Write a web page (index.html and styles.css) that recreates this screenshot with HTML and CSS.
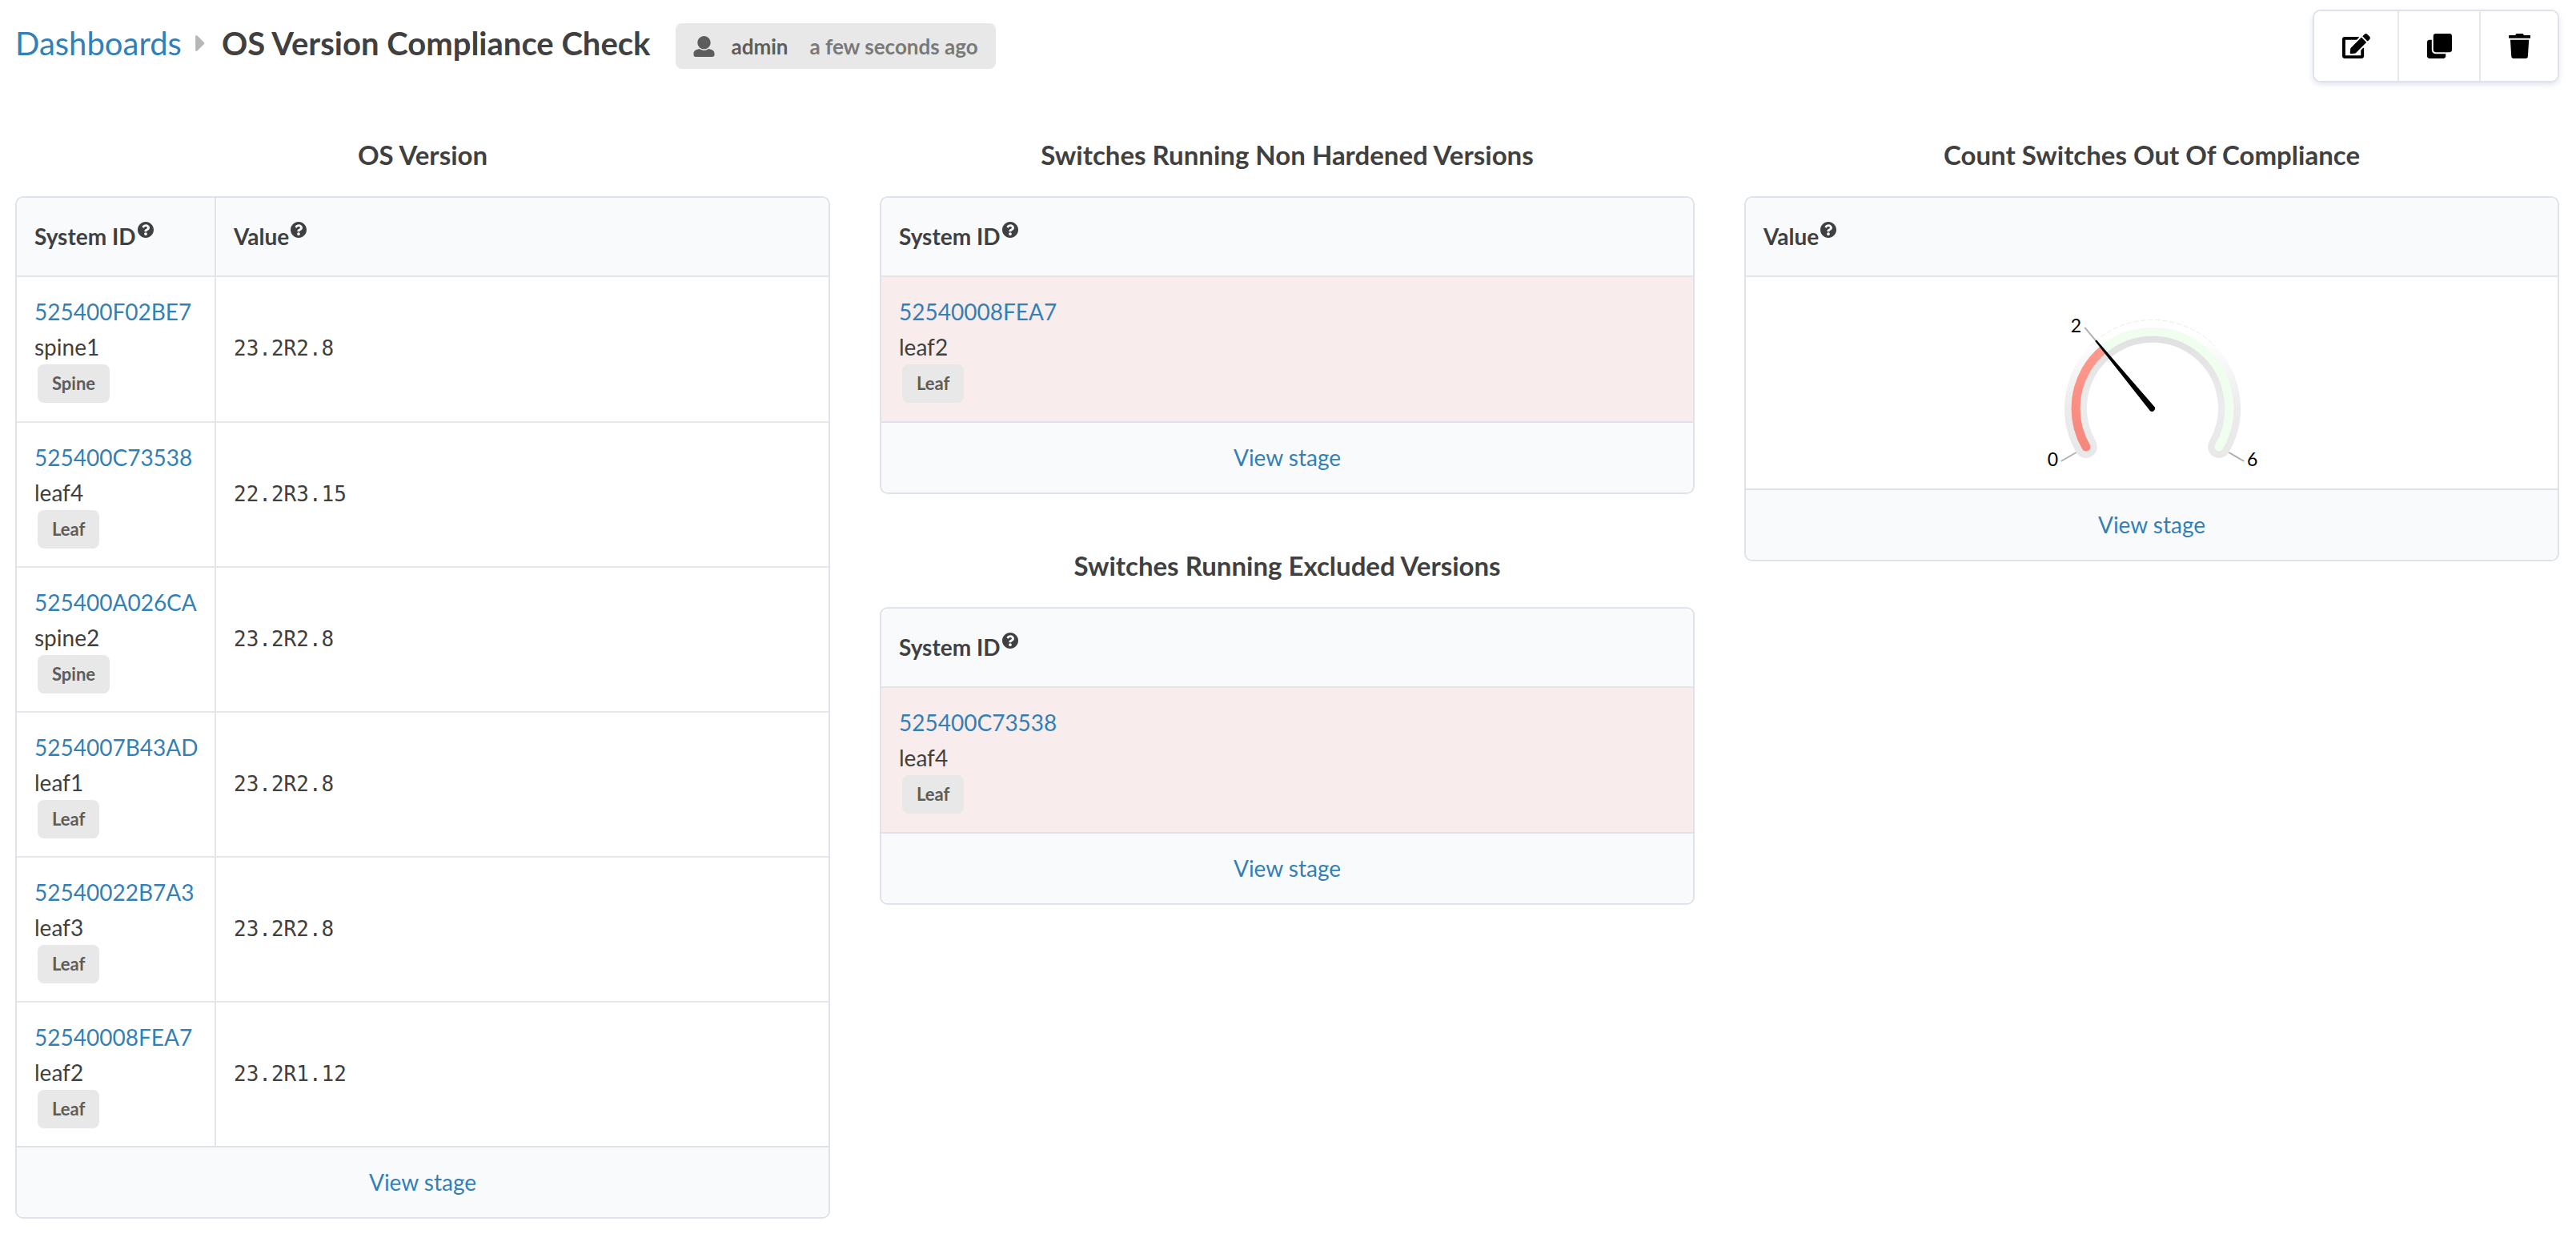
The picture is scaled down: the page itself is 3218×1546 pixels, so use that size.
FILE: index.html
```html
<!DOCTYPE html>
<html lang="en">
<head>
<meta charset="utf-8">
<title>OS Version Compliance Check</title>
<link rel="stylesheet" href="styles.css">
</head>
<body>
<svg class="sprite" aria-hidden="true">
  <symbol id="help" viewBox="8 8 496 496"><path d="M504 256c0 136.997-111.043 248-248 248S8 392.997 8 256C8 119.083 119.043 8 256 8s248 111.083 248 248zM262.655 90c-54.497 0-89.255 22.957-116.549 63.758-3.536 5.286-2.353 12.415 2.715 16.258l34.699 26.31c5.205 3.947 12.621 3.008 16.665-2.122 17.864-22.658 30.113-35.797 57.303-35.797 20.429 0 45.698 13.148 45.698 32.958 0 14.976-12.363 22.667-32.534 33.976C247.128 238.528 216 254.941 216 296v4c0 6.627 5.373 12 12 12h56c6.627 0 12-5.373 12-12v-1.333c0-28.462 83.186-29.647 83.186-106.667 0-58.002-60.165-102-116.531-102zM256 338c-25.365 0-46 20.635-46 46 0 25.364 20.635 46 46 46s46-20.636 46-46c0-25.364-20.635-46-46-46z"/></symbol>
</svg>
<header class="topbar">
  <nav class="breadcrumb" aria-label="Breadcrumb">
    <a href="#">Dashboards</a>
    <svg class="caret" viewBox="0 0 192 512" aria-hidden="true"><path d="M0 384.662V127.338c0-17.818 21.543-26.741 34.142-14.142l128.657 128.657c7.81 7.81 7.81 20.474 0 28.284L34.142 398.804C21.543 411.404 0 402.48 0 384.662z"/></svg>
    <h1 class="page-title">OS Version Compliance Check</h1>
  </nav>
  <div class="label author">
    <svg class="user-icon" viewBox="0 0 512 512" aria-hidden="true"><path d="M256 0c88.366 0 160 71.634 160 160s-71.634 160-160 160S96 248.366 96 160 167.634 0 256 0zm183.283 333.821l-71.313-17.828c-74.923 53.89-165.738 41.864-223.94 0l-71.313 17.828C29.981 344.505 0 382.903 0 426.955V464c0 26.51 21.49 48 48 48h416c26.51 0 48-21.49 48-48v-37.045c0-44.052-29.981-82.45-72.717-93.134z"/></svg>
    <span>admin</span>
    <span class="time">a few seconds ago</span>
  </div>
  <div class="actions">
    <button type="button" class="action" aria-label="Edit"><svg class="action-icon" viewBox="0 0 576 512"><path d="M402.6 83.2l90.2 90.2c3.8 3.8 3.8 10 0 13.8L274.4 405.6l-92.8 10.3c-12.4 1.4-22.9-9.1-21.5-21.5l10.3-92.8L388.8 83.2c3.8-3.8 10-3.8 13.8 0zm162-22.9l-48.8-48.8c-15.2-15.2-39.9-15.2-55.2 0l-35.4 35.4c-3.8 3.8-3.8 10 0 13.8l90.2 90.2c3.8 3.8 10 3.8 13.8 0l35.4-35.4c15.2-15.3 15.2-40 0-55.2zM384 346.2V448H64V128h229.8c3.2 0 6.2-1.3 8.5-3.5l40-40c7.6-7.6 2.2-20.5-8.5-20.5H48C21.5 64 0 85.5 0 112v352c0 26.5 21.5 48 48 48h352c26.5 0 48-21.5 48-48V306.2c0-10.7-12.9-16-20.5-8.5l-40 40c-2.2 2.3-3.5 5.3-3.5 8.5z"/></svg></button>
    <button type="button" class="action" aria-label="Clone"><svg class="action-icon" viewBox="0 0 512 512"><path d="M464 0c26.51 0 48 21.49 48 48v288c0 26.51-21.49 48-48 48H176c-26.51 0-48-21.49-48-48V48c0-26.51 21.49-48 48-48h288M176 416c-44.112 0-80-35.888-80-80V128H48c-26.51 0-48 21.49-48 48v288c0 26.51 21.49 48 48 48h288c26.51 0 48-21.49 48-48v-48H176z"/></svg></button>
    <button type="button" class="action" aria-label="Delete"><svg class="action-icon" viewBox="0 0 448 512"><path d="M432 32H312l-9.4-18.7A24 24 0 0 0 281.1 0H166.8a23.72 23.72 0 0 0-21.4 13.3L136 32H16A16 16 0 0 0 0 48v32a16 16 0 0 0 16 16h416a16 16 0 0 0 16-16V48a16 16 0 0 0-16-16zM53.2 467a48 48 0 0 0 47.9 45h245.8a48 48 0 0 0 47.9-45L416 128H32z"/></svg></button>
  </div>
</header>
<main class="board">
  <div class="column">
    <section class="widget">
      <h2 class="widget-title">OS Version</h2>
      <div class="panel">
        <table class="grid">
          <thead><tr><th class="id-col" scope="col">System ID<svg class="help"><use href="#help"/></svg></th><th scope="col">Value<svg class="help"><use href="#help"/></svg></th></tr></thead>
          <tbody>
            <tr><td class="id-col"><a href="#">525400F02BE7</a><div>spine1</div><span class="label role">Spine</span></td><td class="mono">23.2R2.8</td></tr>
            <tr><td class="id-col"><a href="#">525400C73538</a><div>leaf4</div><span class="label role">Leaf</span></td><td class="mono">22.2R3.15</td></tr>
            <tr><td class="id-col"><a href="#">525400A026CA</a><div>spine2</div><span class="label role">Spine</span></td><td class="mono">23.2R2.8</td></tr>
            <tr><td class="id-col"><a href="#">5254007B43AD</a><div>leaf1</div><span class="label role">Leaf</span></td><td class="mono">23.2R2.8</td></tr>
            <tr><td class="id-col"><a href="#">52540022B7A3</a><div>leaf3</div><span class="label role">Leaf</span></td><td class="mono">23.2R2.8</td></tr>
            <tr><td class="id-col"><a href="#">52540008FEA7</a><div>leaf2</div><span class="label role">Leaf</span></td><td class="mono">23.2R1.12</td></tr>
          </tbody>
        </table>
        <div class="panel-footer"><a href="#">View stage</a></div>
      </div>
    </section>
  </div>
  <div class="column">
    <section class="widget">
      <h2 class="widget-title">Switches Running Non Hardened Versions</h2>
      <div class="panel">
        <table class="grid">
          <thead><tr><th scope="col">System ID<svg class="help"><use href="#help"/></svg></th></tr></thead>
          <tbody><tr class="anomaly"><td><a href="#">52540008FEA7</a><div>leaf2</div><span class="label role">Leaf</span></td></tr></tbody>
        </table>
        <div class="panel-footer"><a href="#">View stage</a></div>
      </div>
    </section>
    <section class="widget">
      <h2 class="widget-title">Switches Running Excluded Versions</h2>
      <div class="panel">
        <table class="grid">
          <thead><tr><th scope="col">System ID<svg class="help"><use href="#help"/></svg></th></tr></thead>
          <tbody><tr class="anomaly"><td><a href="#">525400C73538</a><div>leaf4</div><span class="label role">Leaf</span></td></tr></tbody>
        </table>
        <div class="panel-footer"><a href="#">View stage</a></div>
      </div>
    </section>
  </div>
  <div class="column">
    <section class="widget">
      <h2 class="widget-title">Count Switches Out Of Compliance</h2>
      <div class="panel">
        <table class="grid">
          <thead><tr><th scope="col">Value<svg class="help"><use href="#help"/></svg></th></tr></thead>
          <tbody><tr><td class="gauge-cell">
            <svg class="gauge" viewBox="-151 -143 300 220" role="img" aria-label="2 on a scale from 0 to 6">
              <defs>
                <linearGradient id="rim" gradientUnits="userSpaceOnUse" x1="0" y1="-110" x2="0" y2="62"><stop offset=".12" stop-color="#fff"/><stop offset=".65" stop-color="#ebebeb"/><stop offset="1" stop-color="#e8e8e8"/></linearGradient>
                <linearGradient id="lip" gradientUnits="userSpaceOnUse" x1="0" y1="-96" x2="0" y2="62"><stop offset="0" stop-color="#e0e0e0"/><stop offset=".6" stop-color="#ececec"/><stop offset="1" stop-color="#e8e8e8"/></linearGradient>
                <linearGradient id="low" gradientUnits="userSpaceOnUse" x1="0" y1="-80" x2="0" y2="55"><stop offset="0" stop-color="#ff9a8e"/><stop offset="1" stop-color="#f5867b"/></linearGradient>
              </defs>
              <path class="arc track" stroke="url(#rim)" d="M-83.1 48A96 96 0 1 1 83.1 48"/>
              <path class="edge" d="M-78 -78A110 110 0 0 1 78 -78"/>
              <path class="arc lip" stroke="url(#lip)" d="M-76 43.9A87.8 87.8 0 1 1 76 43.9"/>
              <path class="arc band" stroke="#effeef" d="M-61.7 -73.5A96 96 0 0 1 83.1 48"/>
              <path class="arc band" stroke="url(#low)" d="M-83.1 48A96 96 0 0 1 -83.1 -48"/>
              <path class="band cut" stroke="url(#low)" d="M-83.1 -48A96 96 0 0 1 -61.7 -73.5"/>
              <path class="tick" d="M-95.3 55L-114.3 66M95.3 55L114.3 66M-70.7 -84.3L-84.8 -101.1"/>
              <path class="needle" d="M-71.8 -84L-70 -85.6L2.9 -1.6A4 4 0 0 1 -3 3.2Z"/>
              <text class="scale" x="-118" y="72" text-anchor="end">0</text>
              <text class="scale" x="-89" y="-95" text-anchor="end">2</text>
              <text class="scale" x="118" y="72">6</text>
            </svg>
          </td></tr></tbody>
        </table>
        <div class="panel-footer"><a href="#">View stage</a></div>
      </div>
    </section>
  </div>
</main>
</body>
</html>
```
FILE: styles.css
```css
* {
  box-sizing: border-box;
}

body {
  margin: 0;
  padding: 12px 21px 20px 19px;
  background: #fff;
  color: #404040;
  font: 28px/44px Lato, "Liberation Sans", sans-serif;
}

a {
  color: #337fb7;
  text-decoration: none;
}

.sprite {
  display: none;
}

/* Top bar */
.topbar {
  display: flex;
  align-items: center;
  height: 91px;
}

.breadcrumb {
  display: flex;
  align-items: center;
  padding-bottom: 8px;
  font-size: 40px;
}

.caret {
  width: 13px;
  height: 34px;
  margin: 0 20px 0 17px;
  fill: #b7b7b7;
}

.page-title {
  margin: 0;
  font-size: 40px;
  font-weight: 700;
}

.label {
  border-radius: 8px;
  background: #e8e8e8;
  color: #5d5d5d;
  font-weight: 700;
}

.author {
  display: flex;
  align-items: center;
  gap: 20px;
  height: 57px;
  margin-left: 32px;
  padding: 0 22px;
  font-size: 26px;
}

.user-icon {
  width: 27px;
  height: 26px;
  fill: currentColor;
}

.time {
  padding-left: 7px;
  color: #797979;
}

.actions {
  display: flex;
  height: 91px;
  margin-left: auto;
  overflow: hidden;
  border: 2px solid #dfe2ea;
  border-radius: 10px;
  box-shadow: 0 3px 6px rgba(200, 205, 225, 0.5);
}

.action {
  display: flex;
  align-items: center;
  justify-content: center;
  padding: 0 34px 0 35px;
  border: 0;
  border-left: 2px solid #e8e8e8;
  background: #fff;
}

.action:first-child {
  border-left: 0;
}

.action-icon {
  height: 31px;
}

/* Dashboard columns */
.board {
  display: grid;
  grid-template-columns: repeat(3, minmax(0, 1fr));
  gap: 62px;
  padding-top: 68px;
}

.widget + .widget {
  margin-top: 67px;
}

.widget-title {
  margin: 0 0 30px;
  font-size: 33px;
  font-weight: 700;
  line-height: 44px;
  text-align: center;
}

.panel {
  overflow: hidden;
  border: 2px solid #dfe2ea;
  border-radius: 10px;
}

.grid {
  width: 100%;
  border-collapse: separate;
  border-spacing: 0;
}

.grid th {
  height: 99px;
  padding: 0 22px 2px;
  border-bottom: 2px solid #e3e5e7;
  background: #f9fafc;
  text-align: left;
}

.grid td {
  height: 180px;
  padding: 0 22px 2px;
}

.grid tr + tr td {
  height: 181px;
  border-top: 2px solid #e6e7e9;
}

.grid th + th,
.grid td + td {
  border-left: 2px solid #e3e5e9;
}

.grid .id-col {
  width: 247px;
  padding-right: 18px;
}

.help {
  width: 20px;
  height: 20px;
  margin-left: 2px;
  vertical-align: 9px;
  fill: currentColor;
}

.role {
  display: block;
  width: fit-content;
  margin-left: 4px;
  padding: 0 18px;
  font-size: 22px;
  line-height: 48px;
}

.mono {
  font-family: "DejaVu Sans Mono", monospace;
  font-size: 26px;
}

.anomaly td {
  background: #f8ecec;
}

.panel-footer {
  padding: 21px 22px 22px;
  border-top: 2px solid #dfe2ea;
  background: #f9fafc;
  text-align: center;
}

/* Gauge */
.grid .gauge-cell {
  height: 264px;
}

.gauge {
  display: block;
  width: 300px;
  height: 220px;
  margin: 0 auto;
}

.arc,
.band {
  fill: none;
  stroke-linecap: round;
}

.track {
  stroke-width: 28px;
}

.edge {
  fill: none;
  stroke: #ececec;
  stroke-width: 1px;
  stroke-dasharray: 6 3;
}

.lip {
  stroke-width: 11px;
}

.band {
  stroke-width: 11px;
}

.cut {
  stroke-linecap: butt;
}

.tick {
  fill: none;
  stroke: #b0b0b0;
  stroke-width: 2px;
}

.needle {
  fill: #000;
}

.scale {
  fill: #000;
  font-size: 23px;
}
```
